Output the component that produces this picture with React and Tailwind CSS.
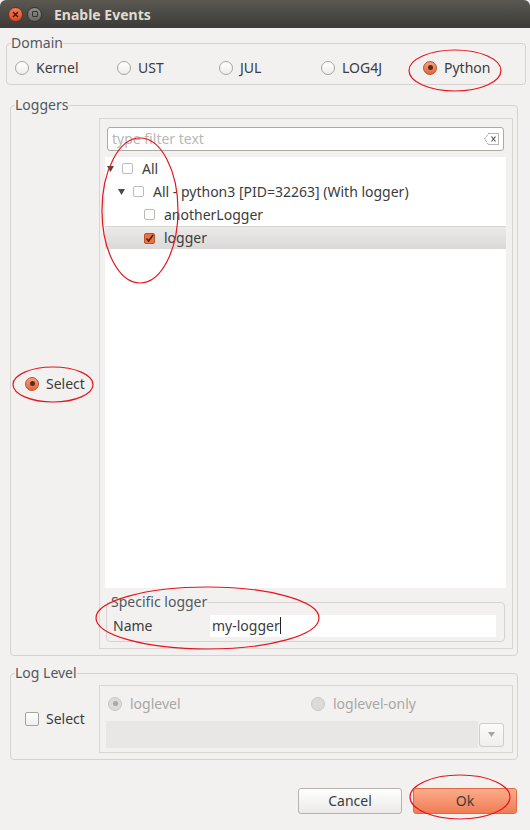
import React from 'react'

const Radio = ({ checked, disabled }) => {
  if (disabled) {
    return (
      <div className="w-[14px] h-[14px] rounded-full border border-[#c9c7c3] bg-[#dcdbd9] flex items-center justify-center shrink-0">
        {checked && <div className="w-[5px] h-[5px] rounded-full bg-[#a9a7a3]" />}
      </div>
    )
  }
  if (checked) {
    return (
      <div className="w-[14px] h-[14px] rounded-full border border-[#b9532c] bg-linear-to-b from-[#f4a07a] to-[#e4643a] flex items-center justify-center shrink-0">
        <div className="w-[5px] h-[5px] rounded-full bg-[#5a2a17]" />
      </div>
    )
  }
  return <div className="w-[14px] h-[14px] rounded-full border border-[#a7a49e] bg-linear-to-b from-white to-[#eeedeb] shrink-0" />
}

const TreeCheck = ({ checked }) =>
  checked ? (
    <div className="w-[11px] h-[11px] rounded-[2px] border border-[#b9532c] bg-[#ea7343] flex items-center justify-center shrink-0">
      <svg width="9" height="9" viewBox="0 0 9 9">
        <path d="M1.5 4.5L3.7 7L8 1" fill="none" stroke="#3a2014" strokeWidth="1.5" />
      </svg>
    </div>
  ) : (
    <div className="w-[11px] h-[11px] rounded-[2px] border border-[#bdbbb6] bg-white shrink-0" />
  )

const Arrow = () => (
  <svg width="7" height="6" viewBox="0 0 7 6" className="shrink-0">
    <path d="M0 0H7L3.5 6Z" fill="#4a4a4a" />
  </svg>
)

export default function App() {
  const domains = [
    { label: 'Kernel' },
    { label: 'UST' },
    { label: 'JUL' },
    { label: 'LOG4J' },
    { label: 'Python', checked: true },
  ]

  return (
    <div className="relative w-[530px] h-[830px] bg-[#f2f1f0] font-['Noto_Sans',sans-serif] text-[14px] text-[#3c3c3c] overflow-hidden">
      {/* title bar */}
      <div className="h-[28px] flex items-center bg-linear-to-b from-[#5b5852] to-[#3c3b37] rounded-t-[6px]">
        <div className="ml-[8px] w-[15px] h-[15px] rounded-full bg-linear-to-b from-[#f47d58] to-[#dc4a1e] border border-[#7d2a10] flex items-center justify-center">
          <svg width="7" height="7" viewBox="0 0 7 7">
            <path d="M1 1L6 6M6 1L1 6" stroke="#3a1a0e" strokeWidth="1.4" />
          </svg>
        </div>
        <div className="ml-[4px] w-[15px] h-[15px] rounded-full bg-linear-to-b from-[#8f8d88] to-[#6a6964] border border-[#34332f] flex items-center justify-center">
          <div className="w-[6px] h-[6px] border border-[#34332f] rounded-[1px]" />
        </div>
        <span className="ml-[12px] mt-[2px] font-bold text-[#dfdbd2] text-[14px] leading-none">Enable Events</span>
      </div>

      {/* Domain */}
      <fieldset className="mt-[7px] mx-[6px] border border-[#d6d3ce] rounded-[4px] pl-[4px]">
        <legend className="text-[#525860] leading-[16px]">Domain</legend>
        <div className="h-[33px] flex items-center pl-[4px]">
          {domains.map((d) => (
            <div key={d.label} className="w-[102px] flex items-center gap-[7px]">
              <Radio checked={d.checked} />
              <span className="leading-none">{d.label}</span>
            </div>
          ))}
        </div>
      </fieldset>

      {/* Loggers */}
      <fieldset className="mt-[12px] ml-[10px] w-[508px] border border-[#d6d3ce] rounded-[4px] pl-[4px] pr-[4px]">
        <legend className="text-[#525860] leading-[16px]">Loggers</legend>
        <div className="flex pt-[5px] pb-[6px]">
          <div className="w-[84px] flex items-center pl-[10px] gap-[7px]">
            <Radio checked />
            <span className="leading-none">Select</span>
          </div>
          <div className="flex-1 h-[531px] border border-[#d9d6d1] flex flex-col pl-[5px] pr-[6px] pt-[8px]">
            <div className="mx-[2px] h-[24px] shrink-0 border border-[#acaaa6] rounded-[3px] bg-white flex items-center justify-between pl-[4px] pr-[4px]">
              <span className="text-[#b8b8b8] leading-none">type filter text</span>
              <svg width="15" height="12" viewBox="0 0 15 12">
                <path d="M4.5 0.5H14.5V11.5H4.5L0.5 6Z" fill="none" stroke="#6f6f6f" strokeDasharray="1 1" />
                <path d="M7.5 3.5L11.5 8.5M11.5 3.5L7.5 8.5" stroke="#555" strokeWidth="1.2" />
              </svg>
            </div>
            <div className="mt-[6px] h-[431px] shrink-0 bg-white flex flex-col">
              <div className="h-[23px] flex items-center pl-[2px]">
                <Arrow />
                <div className="ml-[8px]"><TreeCheck /></div>
                <span className="ml-[9px] leading-none">All</span>
              </div>
              <div className="h-[23px] flex items-center pl-[13px]">
                <Arrow />
                <div className="ml-[8px]"><TreeCheck /></div>
                <span className="ml-[9px] leading-none whitespace-nowrap">All - python3 [PID=32263] (With logger)</span>
              </div>
              <div className="h-[23px] flex items-center pl-[39px]">
                <TreeCheck />
                <span className="ml-[9px] leading-none">anotherLogger</span>
              </div>
              <div className="h-[23px] flex items-center pl-[39px] bg-linear-to-b from-[#eaeae9] to-[#dad9d7] border-t border-[#d6d5d3]">
                <TreeCheck checked />
                <span className="ml-[9px] leading-none">logger</span>
              </div>
            </div>
            <fieldset className="mt-[6px] mx-[1px] border border-[#d6d3ce] rounded-[4px] pl-[4px] pr-[8px]">
              <legend className="text-[#525860] leading-[16px]">Specific logger</legend>
              <div className="h-[31px] flex items-center">
                <span className="w-[99px] pl-[2px] leading-none">Name</span>
                <div className="flex-1 h-[22px] bg-white flex items-center pl-[2px]">
                  <span className="leading-none">my-logger</span>
                  <div className="w-px h-[17px] bg-[#222]" />
                </div>
              </div>
            </fieldset>
          </div>
        </div>
      </fieldset>

      {/* Log Level */}
      <fieldset className="mt-[9px] ml-[10px] w-[508px] border border-[#d6d3ce] rounded-[4px] pl-[4px] pr-[4px]">
        <legend className="text-[#525860] leading-[16px]">Log Level</legend>
        <div className="flex pt-[4px] pb-[6px]">
          <div className="w-[84px] flex items-center pl-[10px] gap-[7px]">
            <div className="w-[14px] h-[14px] rounded-[2px] border border-[#a7a49e] bg-linear-to-b from-white to-[#f0efed]" />
            <span className="leading-none">Select</span>
          </div>
          <div className="flex-1 h-[68px] border border-[#d9d6d1] flex flex-col">
            <div className="h-[35px] flex items-center pl-[8px]">
              <div className="w-[203px] flex items-center gap-[8px]">
                <Radio checked disabled />
                <span className="leading-none text-[#a9a7a4]">loglevel</span>
              </div>
              <div className="flex items-center gap-[8px]">
                <Radio disabled />
                <span className="leading-none text-[#a9a7a4]">loglevel-only</span>
              </div>
            </div>
            <div className="h-[27px] flex items-center pl-[6px]">
              <div className="w-[372px] h-[27px] bg-[#e8e7e5]" />
              <div className="ml-[1px] w-[25px] h-[24px] rounded-[3px] border border-[#cfcdc9] bg-linear-to-b from-[#fbfbfa] to-[#efeeec] flex items-center justify-center">
                <svg width="7" height="5" viewBox="0 0 7 5">
                  <path d="M0 0H7L3.5 5Z" fill="#a8a6a2" />
                </svg>
              </div>
            </div>
          </div>
        </div>
      </fieldset>

      {/* Buttons */}
      <div className="mt-[28px] flex justify-end pr-[13px] gap-[11px]">
        <button className="w-[104px] h-[26px] rounded-[3px] border border-[#b4b2ad] bg-linear-to-b from-white to-[#ebeae8] text-[#3c3c3c] leading-none">
          Cancel
        </button>
        <button className="w-[104px] h-[26px] rounded-[3px] border border-[#dd6a42] bg-linear-to-b from-[#fcac8b] to-[#f07c54] text-[#3c3c3c] leading-none">
          Ok
        </button>
      </div>

      {/* red annotation ellipses */}
      <svg className="absolute inset-0 pointer-events-none" width="530" height="830">
        <g fill="none" stroke="#e8141c" strokeWidth="1.2">
          <ellipse cx="455" cy="70.5" rx="46" ry="20.5" />
          <ellipse cx="140" cy="210.5" rx="38" ry="72.5" />
          <ellipse cx="53" cy="384.5" rx="40" ry="17.5" />
          <ellipse cx="207.5" cy="618" rx="111.5" ry="31" />
          <ellipse cx="460" cy="797" rx="50" ry="22" />
        </g>
      </svg>
    </div>
  )
}
